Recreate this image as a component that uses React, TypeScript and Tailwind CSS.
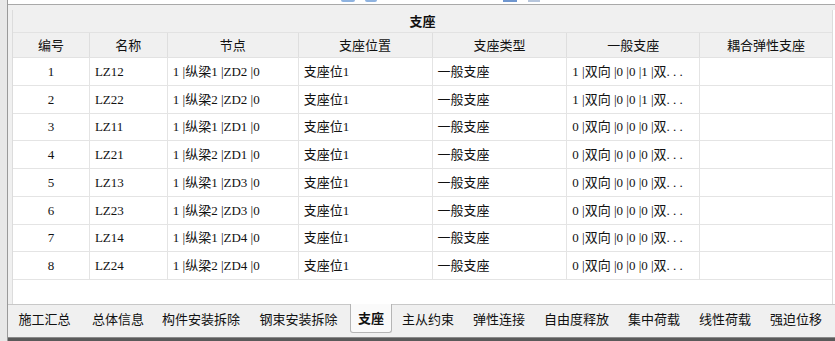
import React from "react";

const cols = [77, 78, 131, 134, 135, 133, 132];
const heads = ["编号", "名称", "节点", "支座位置", "支座类型", "一般支座", "耦合弹性支座"];

const rows = [
  ["1", "LZ12", "1 |纵梁1 |ZD2 |0", "支座位1", "一般支座", "1 |双向 |0 |0 |1 |双. . ."],
  ["2", "LZ22", "1 |纵梁2 |ZD2 |0", "支座位1", "一般支座", "1 |双向 |0 |0 |1 |双. . ."],
  ["3", "LZ11", "1 |纵梁1 |ZD1 |0", "支座位1", "一般支座", "0 |双向 |0 |0 |0 |双. . ."],
  ["4", "LZ21", "1 |纵梁2 |ZD1 |0", "支座位1", "一般支座", "0 |双向 |0 |0 |0 |双. . ."],
  ["5", "LZ13", "1 |纵梁1 |ZD3 |0", "支座位1", "一般支座", "0 |双向 |0 |0 |0 |双. . ."],
  ["6", "LZ23", "1 |纵梁2 |ZD3 |0", "支座位1", "一般支座", "0 |双向 |0 |0 |0 |双. . ."],
  ["7", "LZ14", "1 |纵梁1 |ZD4 |0", "支座位1", "一般支座", "0 |双向 |0 |0 |0 |双. . ."],
  ["8", "LZ24", "1 |纵梁2 |ZD4 |0", "支座位1", "一般支座", "0 |双向 |0 |0 |0 |双. . ."],
];

const rowH = [28, 28, 27, 28, 28, 28, 27, 28];

const tabs = [
  { label: "施工汇总", w: 73 },
  { label: "总体信息", w: 74 },
  { label: "构件安装拆除", w: 92 },
  { label: "钢束安装拆除", w: 103 },
  { label: "支座", w: 42, active: true },
  { label: "主从约束", w: 72 },
  { label: "弹性连接", w: 70 },
  { label: "自由度释放", w: 85 },
  { label: "集中荷载", w: 70 },
  { label: "线性荷载", w: 72 },
  { label: "强迫位移", w: 70 },
];

const cjk = "font-['Microsoft_YaHei','Noto_Sans_CJK_SC',sans-serif]";
const mixed = "font-['Liberation_Serif','Noto_Sans_CJK_SC',serif]";

export default function App() {
  return (
    <div className="w-[835px] h-[341px] bg-white overflow-hidden flex flex-col text-[#111]">
      {/* toolbar remnant */}
      <div className="h-[10px] flex shrink-0">
        <div className="w-[8px] bg-[#e8e8e8] border-r border-[#9a9a9a]" />
        <div className="flex-1 flex flex-col">
          <div className="h-[4px] bg-white relative">
            <div className="absolute left-[333px] top-0 w-[14px] h-[2px] rounded-b bg-[#8fb3e0]" />
            <div className="absolute left-[357px] top-0 w-[12px] h-[2px] rounded-b bg-[#8fb3e0]" />
            <div className="absolute left-[495px] top-0 w-[14px] h-[2px] bg-[#6f96cf]" />
            <div className="absolute left-[520px] top-0 w-[12px] h-[2px] bg-[#b7c6dc]" />
          </div>
          <div className="h-px bg-[#a9a9a9]" />
          <div className="flex-1 bg-[#f0f0f0]" />
        </div>
      </div>

      <div className="flex flex-1 min-h-0">
        <div className="w-[8px] bg-[#e8e8e8] border-r border-[#9a9a9a] shrink-0" />
        <div className="flex-1 flex flex-col bg-[#f0f0f0]">
          <div className="flex flex-1">
            <div className="w-[4px] bg-[#f0f0f0]" />
            <div className="w-[821px] flex flex-col bg-white border-x border-[#dcdcdc]">
              <div className={`h-[23px] bg-[#f0f0f0] border-b border-[#e2e2e2] flex items-center justify-center text-[13px] font-bold ${cjk}`}>
                支座
              </div>
              <div className="h-[25px] flex bg-[#f0f0f0] border-b border-[#e2e2e2]">
                {heads.map((h, i) => (
                  <div
                    key={h}
                    style={{ width: cols[i] }}
                    className={`flex items-center justify-center text-[13px] ${cjk} ${i < 6 ? "border-r border-[#dedede]" : ""}`}
                  >
                    {h}
                  </div>
                ))}
              </div>
              {rows.map((r, ri) => (
                <div key={ri} style={{ height: rowH[ri] }} className="flex border-b border-[#e4e4e4]">
                  {cols.map((w, ci) => (
                    <div
                      key={ci}
                      style={{ width: w }}
                      className={`flex items-center text-[13px] whitespace-nowrap ${mixed} ${ci === 0 ? "justify-center" : "pl-[5px]"} ${ci < 6 ? "border-r border-[#e4e4e4]" : ""}`}
                    >
                      {r[ci] ?? ""}
                    </div>
                  ))}
                </div>
              ))}
              <div className="flex-1 bg-white" />
            </div>
            <div className="flex-1 bg-white" />
          </div>
          {/* tab strip */}
          <div className="h-[33px] flex items-start border-t border-[#c8c8c8] bg-[#f0f0f0]">
            {tabs.map((t) => (
              <div
                key={t.label}
                style={{ width: t.w }}
                className={`h-[29px] -mt-px flex items-center justify-center text-[13px] whitespace-nowrap ${cjk} ${
                  t.active
                    ? "bg-[#fafafa] border border-t-0 border-[#b5b5b5] rounded-b-[3px] font-bold"
                    : ""
                }`}
              >
                {t.label}
              </div>
            ))}
          </div>
          <div className="h-[4px] bg-[#5a5a5a] border-t border-[#8a8a8a]" />
        </div>
      </div>
    </div>
  );
}
